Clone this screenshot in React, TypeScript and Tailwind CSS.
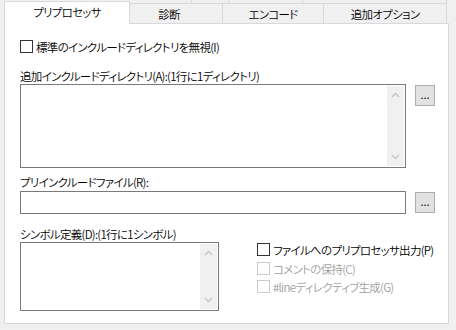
import clsx from 'clsx'

function Chevron({ up }: { up?: boolean }) {
  return (
    <svg width="9" height="6" viewBox="0 0 9 6">
      <path
        d={up ? 'M1 5 L4.5 1.5 L8 5' : 'M1 1 L4.5 4.5 L8 1'}
        stroke="#c4c4c4"
        strokeWidth="1.3"
        fill="none"
      />
    </svg>
  )
}

function ScrollBar() {
  return (
    <div className="w-[17px] h-full bg-[#f0f0f0] flex flex-col justify-between items-center py-[6px]">
      <Chevron up />
      <Chevron />
    </div>
  )
}

function BrowseButton({ className }: { className?: string }) {
  return (
    <div
      className={clsx(
        'w-[20px] h-[21px] bg-[#e1e1e1] border border-[#adadad] flex items-center justify-center text-[11px] leading-none tracking-normal font-normal text-black',
        className
      )}
    >
      <span className="-mt-[3px]">...</span>
    </div>
  )
}

function Check({ label, disabled }: { label: string; disabled?: boolean }) {
  return (
    <div className="flex items-center h-[15px] whitespace-nowrap">
      <span
        className={clsx(
          'w-[13px] h-[13px] border bg-white shrink-0',
          disabled ? 'border-[#cccccc]' : 'border-[#333333]'
        )}
      />
      <span className={clsx('ml-[3px]', disabled ? 'text-[#a0a0a0]' : 'text-black')}>{label}</span>
    </div>
  )
}

export default function App() {
  return (
    <div className="w-[456px] h-[330px] bg-[#f0f0f0] overflow-hidden text-[11.5px] tracking-[-0.7px] font-[350] leading-[16px] text-black font-['Noto_Sans_CJK_JP','Noto_Sans',sans-serif] [font-feature-settings:'palt']">
      {/* Tab header */}
      <div className="h-[23px]">
        {/* back row of tabs */}
        <div className="flex h-[3px]">
          <div className="w-[191px]" />
          <div className="w-[37px] border-l border-[#d9d9d9]" />
          <div className="w-[74px] border-l border-[#d9d9d9]" />
          <div className="w-[145px] border-x border-[#d9d9d9]" />
        </div>
        {/* front row */}
        <div className="flex h-[20px] items-end pl-[4px]">
          <div className="relative z-10 w-[126px] h-[23px] -mb-[1px] bg-white border-x border-t border-[#d9d9d9] flex items-center justify-center pb-[2px]">
            プリプロセッサ
          </div>
          <div className="w-[93px] h-[20px] border-t border-r border-[#d9d9d9] flex items-center justify-center pr-[14px] pt-[1px]">
            診断
          </div>
          <div className="w-[101px] h-[20px] border-t border-r border-[#d9d9d9] flex items-center justify-center pt-[1px]">
            エンコード
          </div>
          <div className="w-[123px] h-[20px] border-t border-r border-[#d9d9d9] flex items-center justify-center pt-[1px]">
            追加オプション
          </div>
        </div>
      </div>

      {/* Panel */}
      <div className="ml-[4px] w-[445px] h-[301px] bg-white border border-[#d9d9d9] pl-[15px] pt-[15px]">
        <Check label="標準のインクルードディレクトリを無視(I)" />

        <div className="mt-[14px] h-[16px]">追加インクルードディレクトリ(A):(1行に1ディレクトリ)</div>
        <div className="flex items-start">
          <div className="w-[386px] h-[84px] border border-[#7a7a7a] p-[1px] flex justify-end">
            <ScrollBar />
          </div>
          <BrowseButton className="ml-[9px] mt-[1px]" />
        </div>

        <div className="mt-[6px] h-[16px]">プリインクルードファイル(R):</div>
        <div className="flex items-start mt-[1px]">
          <div className="w-[386px] h-[23px] border border-[#7a7a7a]" />
          <BrowseButton className="ml-[9px] mt-[1px]" />
        </div>

        <div className="mt-[12px] h-[16px]">シンボル定義(D):(1行に1シンボル)</div>
        <div className="flex items-start">
          <div className="w-[199px] h-[69px] border border-[#7a7a7a] p-[1px] flex justify-end">
            <ScrollBar />
          </div>
          <div className="ml-[38px] flex flex-col">
            <Check label="ファイルへのプリプロセッサ出力(P)" />
            <div className="mt-[4px]">
              <Check label="コメントの保持(C)" disabled />
            </div>
            <div className="mt-[3px]">
              <Check label="#lineディレクティブ生成(G)" disabled />
            </div>
          </div>
        </div>
      </div>
    </div>
  )
}
